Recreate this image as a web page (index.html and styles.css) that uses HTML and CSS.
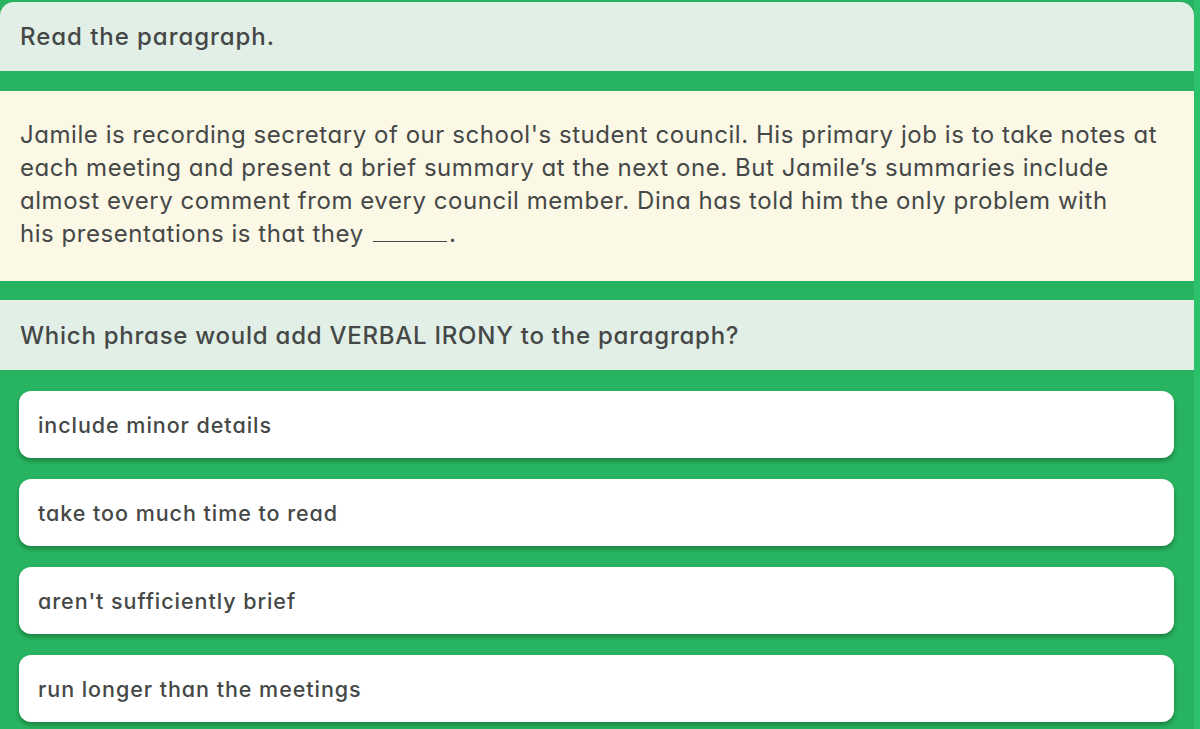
FILE: index.html
```html
<!DOCTYPE html>
<html lang="en">
<head>
<meta charset="utf-8">
<title>Question</title>
<link rel="stylesheet" href="styles.css">
</head>
<body>
<div class="page">
  <div class="panel panel-head">Read the paragraph.</div>
  <div class="panel panel-passage">
    <p>Jamile is recording secretary of our school's student council. His primary job is to take notes at each meeting and present a brief summary at the next one. But Jamile’s summaries include almost every comment from every council member. Dina has told him the only problem with his&nbsp;presentations is that they <span class="blank"></span><span class="stop">.</span></p>
  </div>
  <div class="panel panel-question">Which phrase would add VERBAL IRONY to the paragraph?</div>
  <div class="options">
    <div class="option">include minor details</div>
    <div class="option">take too much time to read</div>
    <div class="option">aren't sufficiently brief</div>
    <div class="option">run longer than the meetings</div>
  </div>
</div>
</body>
</html>
```
FILE: styles.css
```css
html, body {
  margin: 0;
  padding: 0;
}
body {
  background: #2cc26b;
  width: 1200px;
  height: 729px;
  overflow: hidden;
  font-family: Inter, "Noto Sans", sans-serif;
  font-feature-settings: "cv11" 1;
  color: #454846;
}
.page {
  background: #27b35f;
  margin-right: 6px;
  height: 729px;
  padding-top: 2px;
  box-sizing: border-box;
  display: flex;
  flex-direction: column;
}
.panel {
  padding: 0 20px;
}
.panel-head {
  background: #e2efe7;
  height: 69px;
  display: flex;
  align-items: center;
  font-size: 24px;
  letter-spacing: 0.95px;
  font-weight: 500;
  border-radius: 14px 14px 0 0;
}
.panel-passage {
  background: #fbf8e6;
  margin-top: 20px;
  padding-top: 27px;
  padding-bottom: 31px;
}
.panel-passage p {
  margin: 0;
  font-size: 24px;
  letter-spacing: 0.55px;
  line-height: 33px;
  font-weight: 400;
}
.blank {
  display: inline-block;
  width: 74px;
  height: 1px;
  border-bottom: 1.5px solid #454846;
  margin-left: 2px;
  margin-right: 2px;
  vertical-align: baseline;
}
.panel-question {
  background: #e2efe7;
  margin-top: 19px;
  height: 70px;
  display: flex;
  align-items: center;
  font-size: 24px;
  letter-spacing: 0.75px;
  font-weight: 500;
}
.options {
  display: flex;
  flex-direction: column;
  gap: 21px;
  padding: 21px 20px 0 19px;
}
.option {
  background: #ffffff;
  height: 67px;
  border-radius: 12px;
  box-shadow: 0 3px 4px rgba(0, 40, 10, 0.35);
  display: flex;
  align-items: center;
  padding-left: 19px;
  font-size: 21.5px;
  letter-spacing: 0.95px;
  font-weight: 500;
}
```
